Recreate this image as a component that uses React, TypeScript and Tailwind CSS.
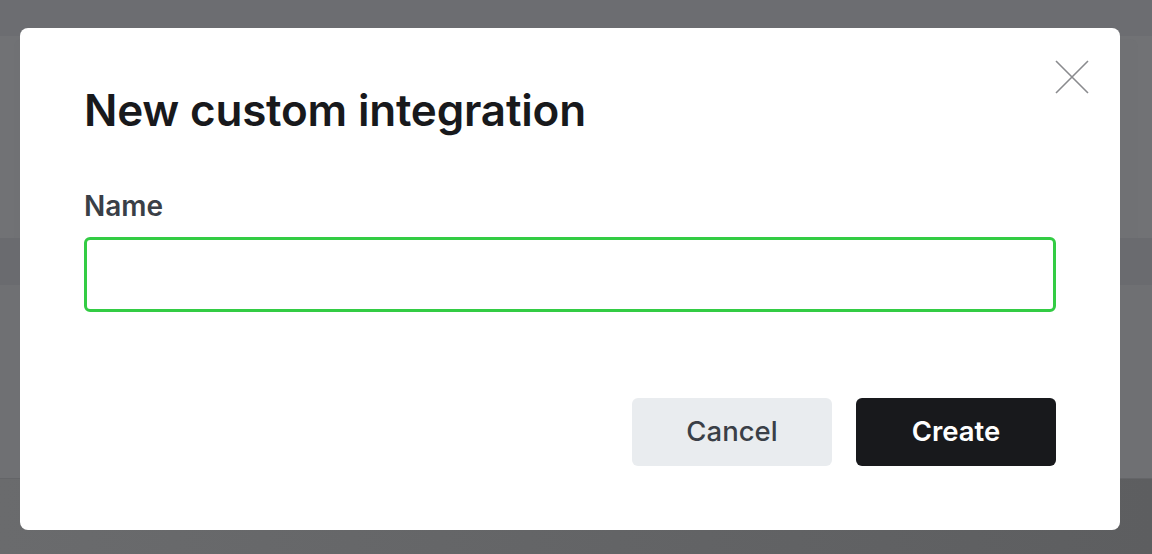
import { useState } from "react";

function CloseIcon() {
  return (
    <svg width="34" height="34" viewBox="0 0 34 34" fill="none" aria-hidden>
      <path d="M1 1L33 33M33 1L1 33" stroke="#8a8b8e" strokeWidth="1.6" />
    </svg>
  );
}

export default function App() {
  const [name, setName] = useState("");

  return (
    <div className="relative h-[554px] w-[1152px] overflow-hidden bg-[#6f7073] font-['Inter',sans-serif]">
      {/* page behind the overlay */}
      <div className="h-[36px] bg-[#6c6d71]" />
      <div className="h-[202px] bg-[#717275] px-[14px] pt-[3px]">
        <div className="h-[205px] rounded-lg bg-[#707174]" />
      </div>
      <div className="h-[47px] bg-[#6a6b6f]" />
      <div className="h-[194px] border-b border-[#646568] bg-[#6f7073]" />
      <div className="h-[75px] bg-gradient-to-r from-[#6a6b6d] to-[#5d5e60]" />

      {/* modal */}
      <div className="absolute left-[20px] top-[28px] flex h-[502px] w-[1100px] flex-col rounded-lg bg-white px-16 pb-16 pt-[56px]">
        <button
          type="button"
          aria-label="Close"
          className="absolute right-[31px] top-[32px] flex h-[34px] w-[34px] items-center justify-center"
        >
          <CloseIcon />
        </button>

        <h2 className="text-[44px] font-semibold leading-[52px] tracking-[-0.2px] text-[#18191c]">
          New custom integration
        </h2>

        <label className="mt-[53px] block text-[28px] font-semibold leading-[34px] text-[#3a3f47]">
          Name
        </label>
        <input
          value={name}
          onChange={(event) => setName(event.target.value)}
          className="mt-[14px] h-[75px] w-full rounded-md border-[3px] border-[#33cc44] px-4 text-[26px] text-[#18191c] outline-none"
        />

        <div className="mt-auto flex justify-end gap-6">
          <button
            type="button"
            className="h-[68px] w-[200px] rounded-md bg-[#e9ecef] text-[27.5px] font-medium text-[#3a3f47]"
          >
            Cancel
          </button>
          <button
            type="button"
            className="h-[68px] w-[200px] rounded-md bg-[#18191c] text-[27.5px] font-semibold text-white"
          >
            Create
          </button>
        </div>
      </div>
    </div>
  );
}
